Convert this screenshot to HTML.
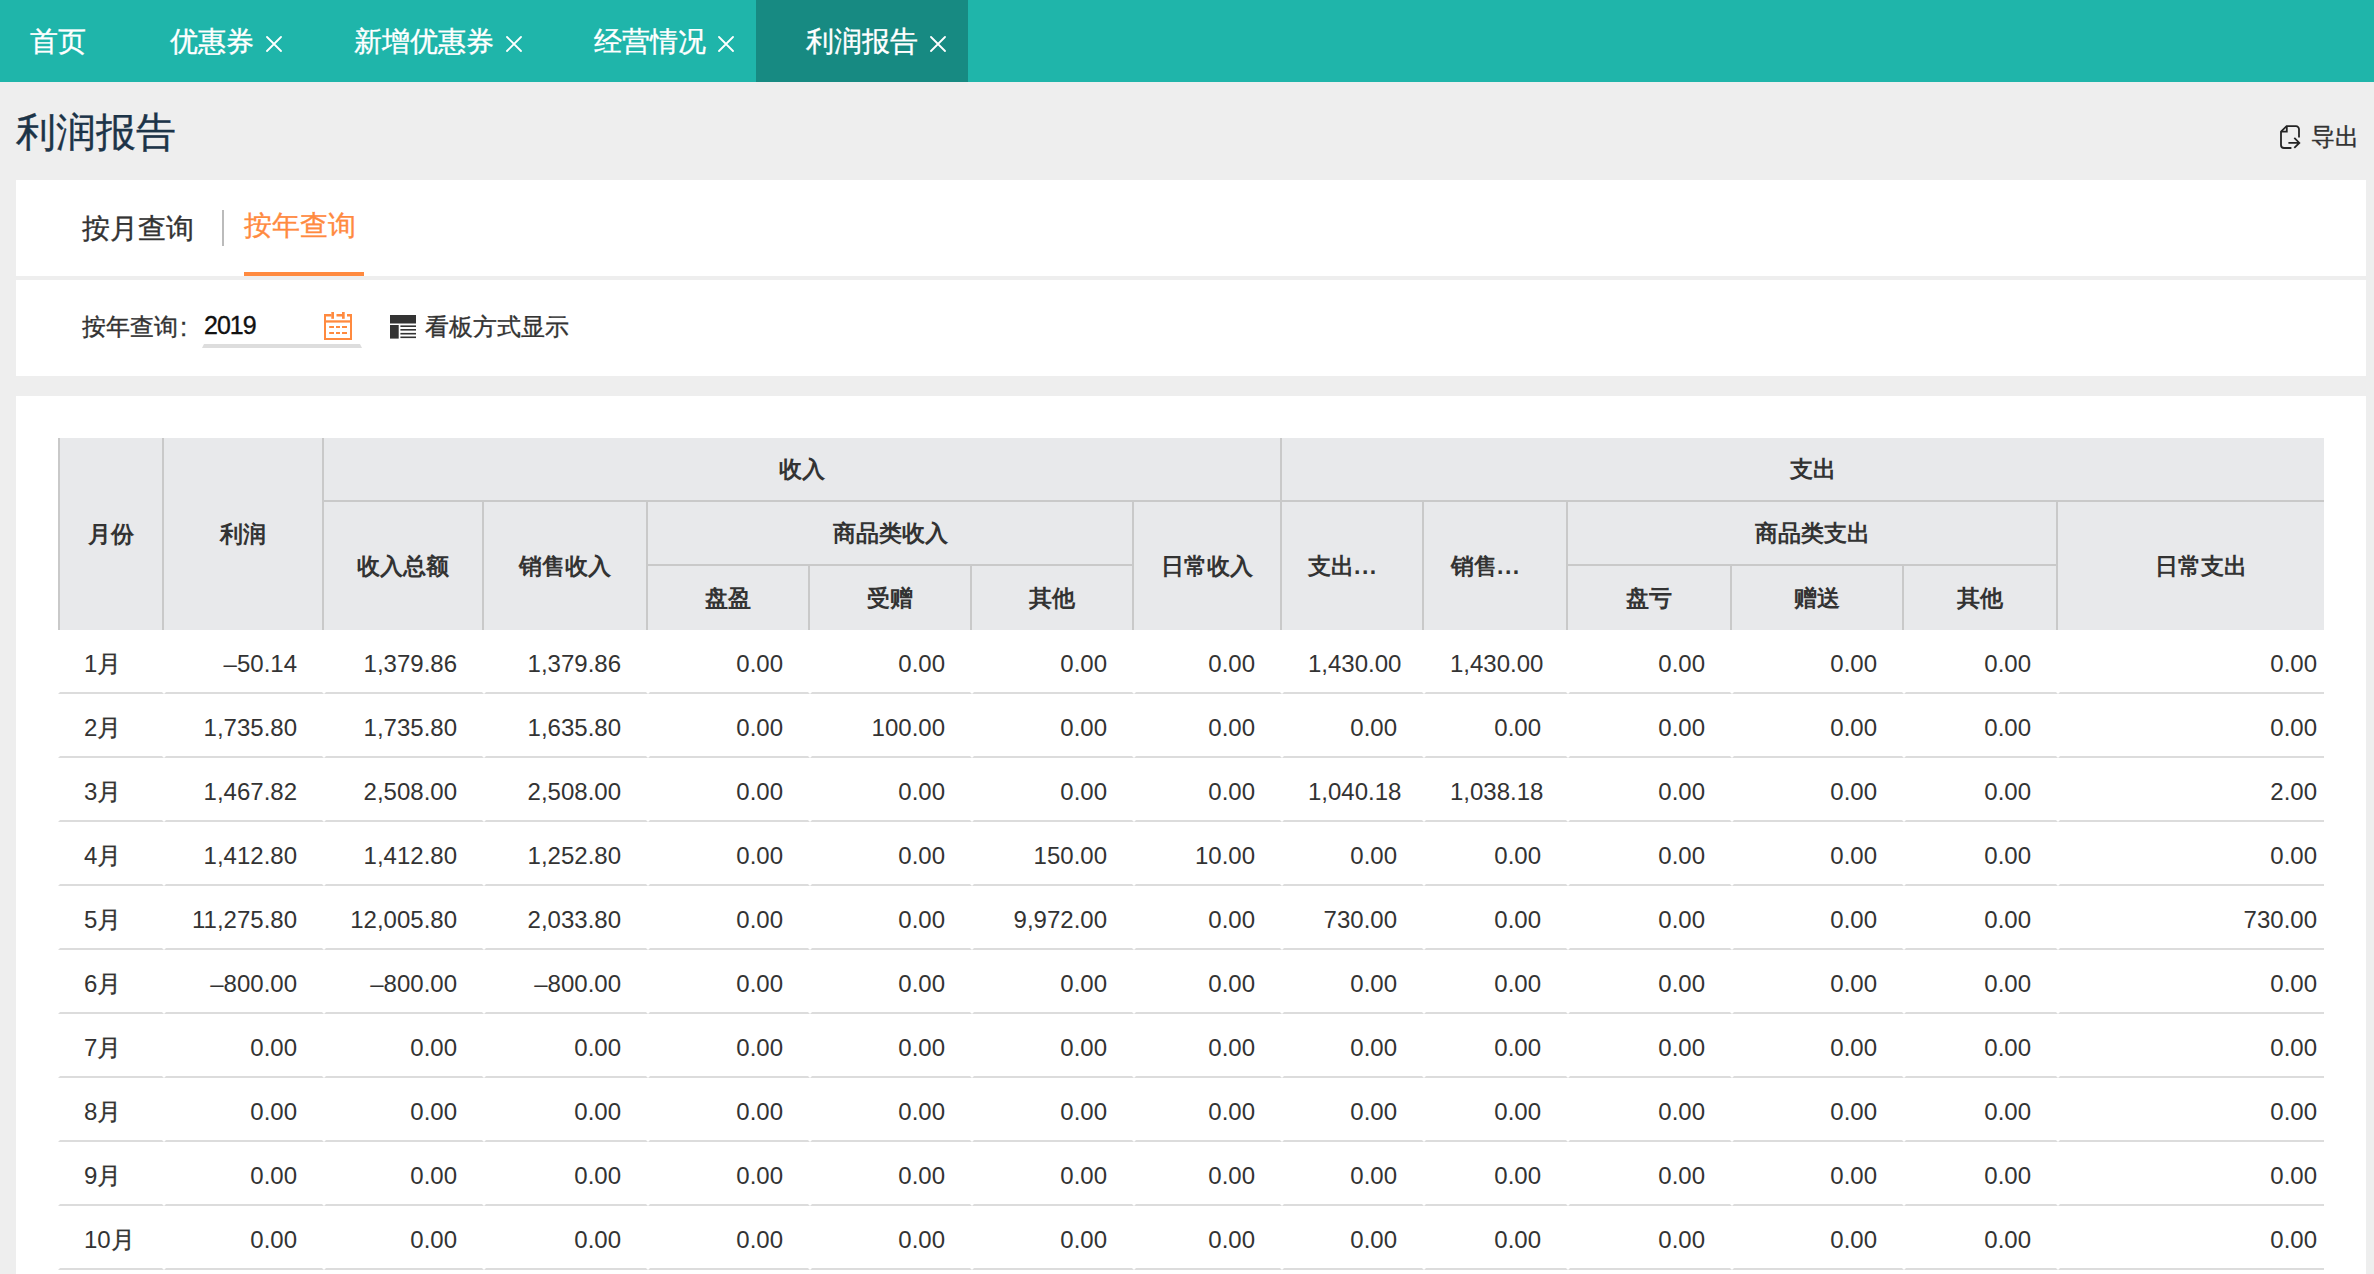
<!DOCTYPE html>
<html><head><meta charset="utf-8">
<style>
*{margin:0;padding:0;box-sizing:border-box}
html,body{width:2374px;height:1274px;overflow:hidden;background:#eeeeee;font-family:"Liberation Sans",sans-serif;color:#333}
.a{-webkit-text-stroke:0.35px currentColor}.td .c{-webkit-text-stroke:0.3px currentColor}
.a{position:absolute;white-space:nowrap}
#topbar{position:absolute;left:0;top:0;width:2374px;height:82px;background:#1fb5aa}
#acttab{position:absolute;left:756px;top:0;width:212px;height:82px;background:#178a82}
.tab{font-size:28px;line-height:28px;color:#fff;top:28px}
.x{position:absolute;top:36px;width:16px;height:16px}
#title{font-size:40px;line-height:40px;color:#1c3448;left:16px;top:112px}
#exp{font-size:24px;line-height:24px;color:#333;left:2311px;top:125px}
.panel{position:absolute;left:16px;width:2350px;background:#fff}
.qt{font-size:28px;line-height:28px}
.lbl{font-size:24px;line-height:24px}
.th{position:absolute;background:#e8e9eb;font-weight:bold;font-size:23px;white-space:nowrap;display:flex;align-items:center;justify-content:center;color:#333}
.bl{border-left:2px solid #c9c9c9}
.bt{border-top:2px solid #c9c9c9}
.row{position:absolute;left:58px;height:64px;width:2266px}
.td{position:absolute;height:64px;border-left:2px solid #fff;border-bottom:2px solid #dcdcdc;font-size:24px;line-height:62px;padding-top:3px;text-align:right;color:#333;white-space:nowrap}
</style></head><body>
<div id="topbar"></div>
<div id="acttab"></div>
<div class="a tab" style="left:30px">首页</div>
<div class="a tab" style="left:170px">优惠券</div>
<svg class="x" style="left:266px" viewBox="0 0 16 16"><path d="M1 1L15 15M15 1L1 15" stroke="#fff" stroke-width="1.8" stroke-linecap="round"/></svg>
<div class="a tab" style="left:354px">新增优惠券</div>
<svg class="x" style="left:506px" viewBox="0 0 16 16"><path d="M1 1L15 15M15 1L1 15" stroke="#fff" stroke-width="1.8" stroke-linecap="round"/></svg>
<div class="a tab" style="left:594px">经营情况</div>
<svg class="x" style="left:718px" viewBox="0 0 16 16"><path d="M1 1L15 15M15 1L1 15" stroke="#fff" stroke-width="1.8" stroke-linecap="round"/></svg>
<div class="a tab" style="left:806px">利润报告</div>
<svg class="x" style="left:930px" viewBox="0 0 16 16"><path d="M1 1L15 15M15 1L1 15" stroke="#fff" stroke-width="1.8" stroke-linecap="round"/></svg>

<div class="a" id="title">利润报告</div>
<svg class="a" style="left:2274px;top:118px" width="32" height="36" viewBox="0 0 32 36" fill="none" stroke="#242424" stroke-width="1.8" stroke-linecap="butt" stroke-linejoin="miter">
<path d="M25 19.4V11.2a3 3 0 0 0-3-3H12.6L7 13.6V27a3 3 0 0 0 3 3h7.4"/>
<path d="M12.8 8.2V13.6H7"/>
<path d="M14.4 24.9H25M20.3 19.9L25.3 24.9L20.3 29.8"/>
</svg>
<div class="a" id="exp">导出</div>

<div class="panel" style="top:180px;height:96px"></div>
<div class="a qt" style="left:82px;top:215px;color:#333">按月查询</div>
<div class="a" style="left:222px;top:210px;width:2px;height:36px;background:#bbb"></div>
<div class="a qt" style="left:244px;top:212px;color:#ff8a3f">按年查询</div>
<div class="a" style="left:244px;top:272px;width:120px;height:4px;background:#ff8a3f"></div>

<div class="panel" style="top:280px;height:96px"></div>
<div class="a lbl" style="left:82px;top:315px">按年查询</div><div class="a lbl" style="left:180px;top:315px;font-size:26px">:</div>
<div class="a lbl" style="left:204px;top:313px;color:#111;font-size:25px;letter-spacing:-1px">2019</div>
<div class="a" style="left:202px;top:344px;width:160px;height:4px;background:#ddd;clip-path:polygon(2px 0,158px 0,160px 4px,0 4px)"></div>
<svg class="a" style="left:324px;top:312px" width="28" height="28" viewBox="0 0 28 28" fill="#ff8a3f">
<rect x="0" y="2" width="2" height="26"/><rect x="26" y="2" width="2" height="26"/><rect x="0" y="26" width="28" height="2"/>
<rect x="0" y="2" width="7.5" height="2.5"/><rect x="12.5" y="2" width="6" height="2.5"/><rect x="23" y="2" width="5" height="2.5"/>
<rect x="7.3" y="0" width="2.7" height="6.8"/><rect x="18" y="0" width="2.7" height="6.8"/>
<rect x="0" y="8.3" width="28" height="2.3"/>
<rect x="5.2" y="14" width="4.8" height="2"/><rect x="12" y="14" width="4" height="2"/><rect x="18" y="14" width="5" height="2"/>
<rect x="5.2" y="20" width="4.8" height="2"/><rect x="12" y="20" width="4" height="2"/><rect x="18" y="20" width="5" height="2"/>
</svg>
<svg class="a" style="left:390px;top:314px" width="26" height="25" viewBox="0 0 26 25" fill="#333">
<rect x="0" y="1" width="26" height="8.5"/>
<rect x="0" y="11" width="8.7" height="13.6"/>
<rect x="10.4" y="11.4" width="15.6" height="1.6"/>
<rect x="10.4" y="15" width="15.6" height="1.6"/>
<rect x="10.4" y="18.9" width="15.6" height="1.6"/>
<rect x="10.4" y="22.5" width="15.6" height="1.6"/>
</svg>
<div class="a lbl" style="left:425px;top:315px">看板方式显示</div>

<div class="panel" style="top:396px;height:900px"></div>
<div class="th bl" style="left:58px;top:438px;width:104px;height:192px;">月份</div>
<div class="th bl" style="left:162px;top:438px;width:160px;height:192px;">利润</div>
<div class="th bl" style="left:322px;top:438px;width:958px;height:62px;">收入</div>
<div class="th bl" style="left:1280px;top:438px;width:1044px;height:62px;padding-left:20px">支出</div>
<div class="th bl bt" style="left:322px;top:500px;width:160px;height:130px;">收入总额</div>
<div class="th bl bt" style="left:482px;top:500px;width:164px;height:130px;">销售收入</div>
<div class="th bl bt" style="left:646px;top:500px;width:486px;height:64px;">商品类收入</div>
<div class="th bl bt" style="left:1132px;top:500px;width:148px;height:130px;">日常收入</div>
<div class="th bl bt" style="left:1280px;top:500px;width:142px;height:130px;justify-content:flex-start;padding-left:26px">支出<span style='letter-spacing:1.5px'>...</span></div>
<div class="th bl bt" style="left:1422px;top:500px;width:144px;height:130px;justify-content:flex-start;padding-left:27px">销售<span style='letter-spacing:1.5px'>...</span></div>
<div class="th bl bt" style="left:1566px;top:500px;width:490px;height:64px;">商品类支出</div>
<div class="th bl bt" style="left:2056px;top:500px;width:268px;height:130px;padding-left:20px">日常支出</div>
<div class="th bl bt" style="left:646px;top:564px;width:162px;height:66px;">盘盈</div>
<div class="th bl bt" style="left:808px;top:564px;width:162px;height:66px;">受赠</div>
<div class="th bl bt" style="left:970px;top:564px;width:162px;height:66px;">其他</div>
<div class="th bl bt" style="left:1566px;top:564px;width:164px;height:66px;">盘亏</div>
<div class="th bl bt" style="left:1730px;top:564px;width:172px;height:66px;">赠送</div>
<div class="th bl bt" style="left:1902px;top:564px;width:154px;height:66px;">其他</div>
<div class="td" style="left:58px;top:630px;width:106px;border-right:2px solid #fff;text-align:left;padding-left:24px;padding-right:0">1<span class="c">月</span></div>
<div class="td" style="left:164px;top:630px;width:160px;border-right:2px solid #fff;padding-left:24px;padding-right:25px">–50.14</div>
<div class="td" style="left:324px;top:630px;width:160px;border-right:2px solid #fff;padding-left:24px;padding-right:25px">1,379.86</div>
<div class="td" style="left:484px;top:630px;width:164px;border-right:2px solid #fff;padding-left:24px;padding-right:25px">1,379.86</div>
<div class="td" style="left:648px;top:630px;width:162px;border-right:2px solid #fff;padding-left:24px;padding-right:25px">0.00</div>
<div class="td" style="left:810px;top:630px;width:162px;border-right:2px solid #fff;padding-left:24px;padding-right:25px">0.00</div>
<div class="td" style="left:972px;top:630px;width:162px;border-right:2px solid #fff;padding-left:24px;padding-right:25px">0.00</div>
<div class="td" style="left:1134px;top:630px;width:148px;border-right:2px solid #fff;padding-left:24px;padding-right:25px">0.00</div>
<div class="td" style="left:1282px;top:630px;width:142px;border-right:2px solid #fff;padding-left:24px;padding-right:25px">1,430.00</div>
<div class="td" style="left:1424px;top:630px;width:144px;border-right:2px solid #fff;padding-left:24px;padding-right:25px">1,430.00</div>
<div class="td" style="left:1568px;top:630px;width:164px;border-right:2px solid #fff;padding-left:24px;padding-right:25px">0.00</div>
<div class="td" style="left:1732px;top:630px;width:172px;border-right:2px solid #fff;padding-left:24px;padding-right:25px">0.00</div>
<div class="td" style="left:1904px;top:630px;width:154px;border-right:2px solid #fff;padding-left:24px;padding-right:25px">0.00</div>
<div class="td" style="left:2058px;top:630px;width:266px;padding-right:7px;padding-left:24px">0.00</div>
<div class="td" style="left:58px;top:694px;width:106px;border-right:2px solid #fff;text-align:left;padding-left:24px;padding-right:0">2<span class="c">月</span></div>
<div class="td" style="left:164px;top:694px;width:160px;border-right:2px solid #fff;padding-left:24px;padding-right:25px">1,735.80</div>
<div class="td" style="left:324px;top:694px;width:160px;border-right:2px solid #fff;padding-left:24px;padding-right:25px">1,735.80</div>
<div class="td" style="left:484px;top:694px;width:164px;border-right:2px solid #fff;padding-left:24px;padding-right:25px">1,635.80</div>
<div class="td" style="left:648px;top:694px;width:162px;border-right:2px solid #fff;padding-left:24px;padding-right:25px">0.00</div>
<div class="td" style="left:810px;top:694px;width:162px;border-right:2px solid #fff;padding-left:24px;padding-right:25px">100.00</div>
<div class="td" style="left:972px;top:694px;width:162px;border-right:2px solid #fff;padding-left:24px;padding-right:25px">0.00</div>
<div class="td" style="left:1134px;top:694px;width:148px;border-right:2px solid #fff;padding-left:24px;padding-right:25px">0.00</div>
<div class="td" style="left:1282px;top:694px;width:142px;border-right:2px solid #fff;padding-left:24px;padding-right:25px">0.00</div>
<div class="td" style="left:1424px;top:694px;width:144px;border-right:2px solid #fff;padding-left:24px;padding-right:25px">0.00</div>
<div class="td" style="left:1568px;top:694px;width:164px;border-right:2px solid #fff;padding-left:24px;padding-right:25px">0.00</div>
<div class="td" style="left:1732px;top:694px;width:172px;border-right:2px solid #fff;padding-left:24px;padding-right:25px">0.00</div>
<div class="td" style="left:1904px;top:694px;width:154px;border-right:2px solid #fff;padding-left:24px;padding-right:25px">0.00</div>
<div class="td" style="left:2058px;top:694px;width:266px;padding-right:7px;padding-left:24px">0.00</div>
<div class="td" style="left:58px;top:758px;width:106px;border-right:2px solid #fff;text-align:left;padding-left:24px;padding-right:0">3<span class="c">月</span></div>
<div class="td" style="left:164px;top:758px;width:160px;border-right:2px solid #fff;padding-left:24px;padding-right:25px">1,467.82</div>
<div class="td" style="left:324px;top:758px;width:160px;border-right:2px solid #fff;padding-left:24px;padding-right:25px">2,508.00</div>
<div class="td" style="left:484px;top:758px;width:164px;border-right:2px solid #fff;padding-left:24px;padding-right:25px">2,508.00</div>
<div class="td" style="left:648px;top:758px;width:162px;border-right:2px solid #fff;padding-left:24px;padding-right:25px">0.00</div>
<div class="td" style="left:810px;top:758px;width:162px;border-right:2px solid #fff;padding-left:24px;padding-right:25px">0.00</div>
<div class="td" style="left:972px;top:758px;width:162px;border-right:2px solid #fff;padding-left:24px;padding-right:25px">0.00</div>
<div class="td" style="left:1134px;top:758px;width:148px;border-right:2px solid #fff;padding-left:24px;padding-right:25px">0.00</div>
<div class="td" style="left:1282px;top:758px;width:142px;border-right:2px solid #fff;padding-left:24px;padding-right:25px">1,040.18</div>
<div class="td" style="left:1424px;top:758px;width:144px;border-right:2px solid #fff;padding-left:24px;padding-right:25px">1,038.18</div>
<div class="td" style="left:1568px;top:758px;width:164px;border-right:2px solid #fff;padding-left:24px;padding-right:25px">0.00</div>
<div class="td" style="left:1732px;top:758px;width:172px;border-right:2px solid #fff;padding-left:24px;padding-right:25px">0.00</div>
<div class="td" style="left:1904px;top:758px;width:154px;border-right:2px solid #fff;padding-left:24px;padding-right:25px">0.00</div>
<div class="td" style="left:2058px;top:758px;width:266px;padding-right:7px;padding-left:24px">2.00</div>
<div class="td" style="left:58px;top:822px;width:106px;border-right:2px solid #fff;text-align:left;padding-left:24px;padding-right:0">4<span class="c">月</span></div>
<div class="td" style="left:164px;top:822px;width:160px;border-right:2px solid #fff;padding-left:24px;padding-right:25px">1,412.80</div>
<div class="td" style="left:324px;top:822px;width:160px;border-right:2px solid #fff;padding-left:24px;padding-right:25px">1,412.80</div>
<div class="td" style="left:484px;top:822px;width:164px;border-right:2px solid #fff;padding-left:24px;padding-right:25px">1,252.80</div>
<div class="td" style="left:648px;top:822px;width:162px;border-right:2px solid #fff;padding-left:24px;padding-right:25px">0.00</div>
<div class="td" style="left:810px;top:822px;width:162px;border-right:2px solid #fff;padding-left:24px;padding-right:25px">0.00</div>
<div class="td" style="left:972px;top:822px;width:162px;border-right:2px solid #fff;padding-left:24px;padding-right:25px">150.00</div>
<div class="td" style="left:1134px;top:822px;width:148px;border-right:2px solid #fff;padding-left:24px;padding-right:25px">10.00</div>
<div class="td" style="left:1282px;top:822px;width:142px;border-right:2px solid #fff;padding-left:24px;padding-right:25px">0.00</div>
<div class="td" style="left:1424px;top:822px;width:144px;border-right:2px solid #fff;padding-left:24px;padding-right:25px">0.00</div>
<div class="td" style="left:1568px;top:822px;width:164px;border-right:2px solid #fff;padding-left:24px;padding-right:25px">0.00</div>
<div class="td" style="left:1732px;top:822px;width:172px;border-right:2px solid #fff;padding-left:24px;padding-right:25px">0.00</div>
<div class="td" style="left:1904px;top:822px;width:154px;border-right:2px solid #fff;padding-left:24px;padding-right:25px">0.00</div>
<div class="td" style="left:2058px;top:822px;width:266px;padding-right:7px;padding-left:24px">0.00</div>
<div class="td" style="left:58px;top:886px;width:106px;border-right:2px solid #fff;text-align:left;padding-left:24px;padding-right:0">5<span class="c">月</span></div>
<div class="td" style="left:164px;top:886px;width:160px;border-right:2px solid #fff;padding-left:24px;padding-right:25px">11,275.80</div>
<div class="td" style="left:324px;top:886px;width:160px;border-right:2px solid #fff;padding-left:24px;padding-right:25px">12,005.80</div>
<div class="td" style="left:484px;top:886px;width:164px;border-right:2px solid #fff;padding-left:24px;padding-right:25px">2,033.80</div>
<div class="td" style="left:648px;top:886px;width:162px;border-right:2px solid #fff;padding-left:24px;padding-right:25px">0.00</div>
<div class="td" style="left:810px;top:886px;width:162px;border-right:2px solid #fff;padding-left:24px;padding-right:25px">0.00</div>
<div class="td" style="left:972px;top:886px;width:162px;border-right:2px solid #fff;padding-left:24px;padding-right:25px">9,972.00</div>
<div class="td" style="left:1134px;top:886px;width:148px;border-right:2px solid #fff;padding-left:24px;padding-right:25px">0.00</div>
<div class="td" style="left:1282px;top:886px;width:142px;border-right:2px solid #fff;padding-left:24px;padding-right:25px">730.00</div>
<div class="td" style="left:1424px;top:886px;width:144px;border-right:2px solid #fff;padding-left:24px;padding-right:25px">0.00</div>
<div class="td" style="left:1568px;top:886px;width:164px;border-right:2px solid #fff;padding-left:24px;padding-right:25px">0.00</div>
<div class="td" style="left:1732px;top:886px;width:172px;border-right:2px solid #fff;padding-left:24px;padding-right:25px">0.00</div>
<div class="td" style="left:1904px;top:886px;width:154px;border-right:2px solid #fff;padding-left:24px;padding-right:25px">0.00</div>
<div class="td" style="left:2058px;top:886px;width:266px;padding-right:7px;padding-left:24px">730.00</div>
<div class="td" style="left:58px;top:950px;width:106px;border-right:2px solid #fff;text-align:left;padding-left:24px;padding-right:0">6<span class="c">月</span></div>
<div class="td" style="left:164px;top:950px;width:160px;border-right:2px solid #fff;padding-left:24px;padding-right:25px">–800.00</div>
<div class="td" style="left:324px;top:950px;width:160px;border-right:2px solid #fff;padding-left:24px;padding-right:25px">–800.00</div>
<div class="td" style="left:484px;top:950px;width:164px;border-right:2px solid #fff;padding-left:24px;padding-right:25px">–800.00</div>
<div class="td" style="left:648px;top:950px;width:162px;border-right:2px solid #fff;padding-left:24px;padding-right:25px">0.00</div>
<div class="td" style="left:810px;top:950px;width:162px;border-right:2px solid #fff;padding-left:24px;padding-right:25px">0.00</div>
<div class="td" style="left:972px;top:950px;width:162px;border-right:2px solid #fff;padding-left:24px;padding-right:25px">0.00</div>
<div class="td" style="left:1134px;top:950px;width:148px;border-right:2px solid #fff;padding-left:24px;padding-right:25px">0.00</div>
<div class="td" style="left:1282px;top:950px;width:142px;border-right:2px solid #fff;padding-left:24px;padding-right:25px">0.00</div>
<div class="td" style="left:1424px;top:950px;width:144px;border-right:2px solid #fff;padding-left:24px;padding-right:25px">0.00</div>
<div class="td" style="left:1568px;top:950px;width:164px;border-right:2px solid #fff;padding-left:24px;padding-right:25px">0.00</div>
<div class="td" style="left:1732px;top:950px;width:172px;border-right:2px solid #fff;padding-left:24px;padding-right:25px">0.00</div>
<div class="td" style="left:1904px;top:950px;width:154px;border-right:2px solid #fff;padding-left:24px;padding-right:25px">0.00</div>
<div class="td" style="left:2058px;top:950px;width:266px;padding-right:7px;padding-left:24px">0.00</div>
<div class="td" style="left:58px;top:1014px;width:106px;border-right:2px solid #fff;text-align:left;padding-left:24px;padding-right:0">7<span class="c">月</span></div>
<div class="td" style="left:164px;top:1014px;width:160px;border-right:2px solid #fff;padding-left:24px;padding-right:25px">0.00</div>
<div class="td" style="left:324px;top:1014px;width:160px;border-right:2px solid #fff;padding-left:24px;padding-right:25px">0.00</div>
<div class="td" style="left:484px;top:1014px;width:164px;border-right:2px solid #fff;padding-left:24px;padding-right:25px">0.00</div>
<div class="td" style="left:648px;top:1014px;width:162px;border-right:2px solid #fff;padding-left:24px;padding-right:25px">0.00</div>
<div class="td" style="left:810px;top:1014px;width:162px;border-right:2px solid #fff;padding-left:24px;padding-right:25px">0.00</div>
<div class="td" style="left:972px;top:1014px;width:162px;border-right:2px solid #fff;padding-left:24px;padding-right:25px">0.00</div>
<div class="td" style="left:1134px;top:1014px;width:148px;border-right:2px solid #fff;padding-left:24px;padding-right:25px">0.00</div>
<div class="td" style="left:1282px;top:1014px;width:142px;border-right:2px solid #fff;padding-left:24px;padding-right:25px">0.00</div>
<div class="td" style="left:1424px;top:1014px;width:144px;border-right:2px solid #fff;padding-left:24px;padding-right:25px">0.00</div>
<div class="td" style="left:1568px;top:1014px;width:164px;border-right:2px solid #fff;padding-left:24px;padding-right:25px">0.00</div>
<div class="td" style="left:1732px;top:1014px;width:172px;border-right:2px solid #fff;padding-left:24px;padding-right:25px">0.00</div>
<div class="td" style="left:1904px;top:1014px;width:154px;border-right:2px solid #fff;padding-left:24px;padding-right:25px">0.00</div>
<div class="td" style="left:2058px;top:1014px;width:266px;padding-right:7px;padding-left:24px">0.00</div>
<div class="td" style="left:58px;top:1078px;width:106px;border-right:2px solid #fff;text-align:left;padding-left:24px;padding-right:0">8<span class="c">月</span></div>
<div class="td" style="left:164px;top:1078px;width:160px;border-right:2px solid #fff;padding-left:24px;padding-right:25px">0.00</div>
<div class="td" style="left:324px;top:1078px;width:160px;border-right:2px solid #fff;padding-left:24px;padding-right:25px">0.00</div>
<div class="td" style="left:484px;top:1078px;width:164px;border-right:2px solid #fff;padding-left:24px;padding-right:25px">0.00</div>
<div class="td" style="left:648px;top:1078px;width:162px;border-right:2px solid #fff;padding-left:24px;padding-right:25px">0.00</div>
<div class="td" style="left:810px;top:1078px;width:162px;border-right:2px solid #fff;padding-left:24px;padding-right:25px">0.00</div>
<div class="td" style="left:972px;top:1078px;width:162px;border-right:2px solid #fff;padding-left:24px;padding-right:25px">0.00</div>
<div class="td" style="left:1134px;top:1078px;width:148px;border-right:2px solid #fff;padding-left:24px;padding-right:25px">0.00</div>
<div class="td" style="left:1282px;top:1078px;width:142px;border-right:2px solid #fff;padding-left:24px;padding-right:25px">0.00</div>
<div class="td" style="left:1424px;top:1078px;width:144px;border-right:2px solid #fff;padding-left:24px;padding-right:25px">0.00</div>
<div class="td" style="left:1568px;top:1078px;width:164px;border-right:2px solid #fff;padding-left:24px;padding-right:25px">0.00</div>
<div class="td" style="left:1732px;top:1078px;width:172px;border-right:2px solid #fff;padding-left:24px;padding-right:25px">0.00</div>
<div class="td" style="left:1904px;top:1078px;width:154px;border-right:2px solid #fff;padding-left:24px;padding-right:25px">0.00</div>
<div class="td" style="left:2058px;top:1078px;width:266px;padding-right:7px;padding-left:24px">0.00</div>
<div class="td" style="left:58px;top:1142px;width:106px;border-right:2px solid #fff;text-align:left;padding-left:24px;padding-right:0">9<span class="c">月</span></div>
<div class="td" style="left:164px;top:1142px;width:160px;border-right:2px solid #fff;padding-left:24px;padding-right:25px">0.00</div>
<div class="td" style="left:324px;top:1142px;width:160px;border-right:2px solid #fff;padding-left:24px;padding-right:25px">0.00</div>
<div class="td" style="left:484px;top:1142px;width:164px;border-right:2px solid #fff;padding-left:24px;padding-right:25px">0.00</div>
<div class="td" style="left:648px;top:1142px;width:162px;border-right:2px solid #fff;padding-left:24px;padding-right:25px">0.00</div>
<div class="td" style="left:810px;top:1142px;width:162px;border-right:2px solid #fff;padding-left:24px;padding-right:25px">0.00</div>
<div class="td" style="left:972px;top:1142px;width:162px;border-right:2px solid #fff;padding-left:24px;padding-right:25px">0.00</div>
<div class="td" style="left:1134px;top:1142px;width:148px;border-right:2px solid #fff;padding-left:24px;padding-right:25px">0.00</div>
<div class="td" style="left:1282px;top:1142px;width:142px;border-right:2px solid #fff;padding-left:24px;padding-right:25px">0.00</div>
<div class="td" style="left:1424px;top:1142px;width:144px;border-right:2px solid #fff;padding-left:24px;padding-right:25px">0.00</div>
<div class="td" style="left:1568px;top:1142px;width:164px;border-right:2px solid #fff;padding-left:24px;padding-right:25px">0.00</div>
<div class="td" style="left:1732px;top:1142px;width:172px;border-right:2px solid #fff;padding-left:24px;padding-right:25px">0.00</div>
<div class="td" style="left:1904px;top:1142px;width:154px;border-right:2px solid #fff;padding-left:24px;padding-right:25px">0.00</div>
<div class="td" style="left:2058px;top:1142px;width:266px;padding-right:7px;padding-left:24px">0.00</div>
<div class="td" style="left:58px;top:1206px;width:106px;border-right:2px solid #fff;text-align:left;padding-left:24px;padding-right:0">10<span class="c">月</span></div>
<div class="td" style="left:164px;top:1206px;width:160px;border-right:2px solid #fff;padding-left:24px;padding-right:25px">0.00</div>
<div class="td" style="left:324px;top:1206px;width:160px;border-right:2px solid #fff;padding-left:24px;padding-right:25px">0.00</div>
<div class="td" style="left:484px;top:1206px;width:164px;border-right:2px solid #fff;padding-left:24px;padding-right:25px">0.00</div>
<div class="td" style="left:648px;top:1206px;width:162px;border-right:2px solid #fff;padding-left:24px;padding-right:25px">0.00</div>
<div class="td" style="left:810px;top:1206px;width:162px;border-right:2px solid #fff;padding-left:24px;padding-right:25px">0.00</div>
<div class="td" style="left:972px;top:1206px;width:162px;border-right:2px solid #fff;padding-left:24px;padding-right:25px">0.00</div>
<div class="td" style="left:1134px;top:1206px;width:148px;border-right:2px solid #fff;padding-left:24px;padding-right:25px">0.00</div>
<div class="td" style="left:1282px;top:1206px;width:142px;border-right:2px solid #fff;padding-left:24px;padding-right:25px">0.00</div>
<div class="td" style="left:1424px;top:1206px;width:144px;border-right:2px solid #fff;padding-left:24px;padding-right:25px">0.00</div>
<div class="td" style="left:1568px;top:1206px;width:164px;border-right:2px solid #fff;padding-left:24px;padding-right:25px">0.00</div>
<div class="td" style="left:1732px;top:1206px;width:172px;border-right:2px solid #fff;padding-left:24px;padding-right:25px">0.00</div>
<div class="td" style="left:1904px;top:1206px;width:154px;border-right:2px solid #fff;padding-left:24px;padding-right:25px">0.00</div>
<div class="td" style="left:2058px;top:1206px;width:266px;padding-right:7px;padding-left:24px">0.00</div>
<div class="td" style="left:58px;top:1270px;width:106px;border-right:2px solid #fff;text-align:left;padding-left:24px;padding-right:0">11<span class="c">月</span></div>
<div class="td" style="left:164px;top:1270px;width:160px;border-right:2px solid #fff;padding-left:24px;padding-right:25px">0.00</div>
<div class="td" style="left:324px;top:1270px;width:160px;border-right:2px solid #fff;padding-left:24px;padding-right:25px">0.00</div>
<div class="td" style="left:484px;top:1270px;width:164px;border-right:2px solid #fff;padding-left:24px;padding-right:25px">0.00</div>
<div class="td" style="left:648px;top:1270px;width:162px;border-right:2px solid #fff;padding-left:24px;padding-right:25px">0.00</div>
<div class="td" style="left:810px;top:1270px;width:162px;border-right:2px solid #fff;padding-left:24px;padding-right:25px">0.00</div>
<div class="td" style="left:972px;top:1270px;width:162px;border-right:2px solid #fff;padding-left:24px;padding-right:25px">0.00</div>
<div class="td" style="left:1134px;top:1270px;width:148px;border-right:2px solid #fff;padding-left:24px;padding-right:25px">0.00</div>
<div class="td" style="left:1282px;top:1270px;width:142px;border-right:2px solid #fff;padding-left:24px;padding-right:25px">0.00</div>
<div class="td" style="left:1424px;top:1270px;width:144px;border-right:2px solid #fff;padding-left:24px;padding-right:25px">0.00</div>
<div class="td" style="left:1568px;top:1270px;width:164px;border-right:2px solid #fff;padding-left:24px;padding-right:25px">0.00</div>
<div class="td" style="left:1732px;top:1270px;width:172px;border-right:2px solid #fff;padding-left:24px;padding-right:25px">0.00</div>
<div class="td" style="left:1904px;top:1270px;width:154px;border-right:2px solid #fff;padding-left:24px;padding-right:25px">0.00</div>
<div class="td" style="left:2058px;top:1270px;width:266px;padding-right:7px;padding-left:24px">0.00</div>
</body></html>
